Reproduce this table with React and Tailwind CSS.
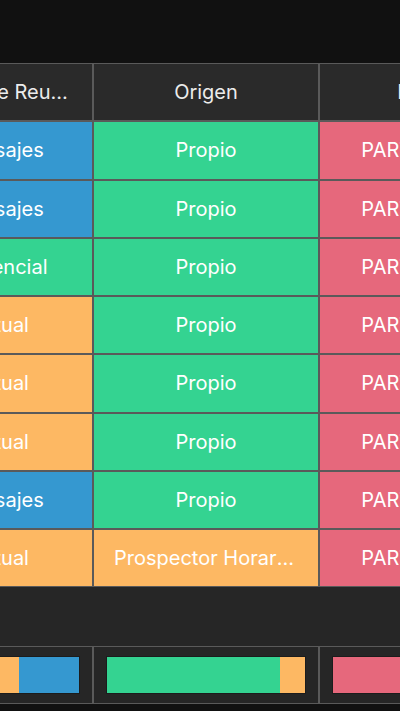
import { useMemo } from 'react';

const TONES = {
  Mensajes: 'bg-[#3598d0]',
  Presencial: 'bg-[#34d391]',
  Virtual: 'bg-[#fdb863]',
  Propio: 'bg-[#34d391]',
  'Prospector Horario Extendido': 'bg-[#fdb863]',
  PARTICIPANTE: 'bg-[#e6687c]',
};

const COLUMNS = [
  { key: 'tipo', label: 'Modo de Reunión' },
  { key: 'origen', label: 'Origen' },
  { key: 'etapa', label: 'Estatus' },
];

const ROWS = [
  { tipo: 'Mensajes', origen: 'Propio', etapa: 'PARTICIPANTE' },
  { tipo: 'Mensajes', origen: 'Propio', etapa: 'PARTICIPANTE' },
  { tipo: 'Presencial', origen: 'Propio', etapa: 'PARTICIPANTE' },
  { tipo: 'Virtual', origen: 'Propio', etapa: 'PARTICIPANTE' },
  { tipo: 'Virtual', origen: 'Propio', etapa: 'PARTICIPANTE' },
  { tipo: 'Virtual', origen: 'Propio', etapa: 'PARTICIPANTE' },
  { tipo: 'Mensajes', origen: 'Propio', etapa: 'PARTICIPANTE' },
  { tipo: 'Virtual', origen: 'Prospector Horario Extendido', etapa: 'PARTICIPANTE' },
];

const GRID = 'grid grid-cols-[189px_226px_226px]';
const CELL = 'h-[58.25px] border border-[#5a5a5a] flex items-center justify-center px-5 min-w-0';

const App = () => {
  // share of each value per column, for the summary bars at the bottom
  const summary = useMemo(
    () =>
      COLUMNS.map((col) => {
        const counts = {};
        ROWS.forEach((row) => {
          counts[row[col.key]] = (counts[row[col.key]] || 0) + 1;
        });
        return Object.entries(counts).map(([value, n]) => ({ value, pct: (n / ROWS.length) * 100 }));
      }),
    []
  );

  const order = ['Presencial', 'Virtual', 'Mensajes', 'Propio', 'Prospector Horario Extendido', 'PARTICIPANTE'];

  return (
    <div className="w-[400px] h-[711px] bg-[#111111] overflow-hidden font-['Inter',sans-serif]">
      <div className="h-[63px]" />

      <div className="bg-[#262626] overflow-hidden">
        <div className="ml-[-96px] w-[641px]">
          <div className={GRID}>
            {COLUMNS.map((col) => (
              <div key={col.key} className={`${CELL} bg-[#2a2a2a]`}>
                <span className="truncate text-[20px] text-[#ececec]">{col.label}</span>
              </div>
            ))}
          </div>

          {ROWS.map((row, i) => (
            <div key={i} className={GRID}>
              {COLUMNS.map((col) => (
                <div key={col.key} className={`${CELL} ${TONES[row[col.key]]}`}>
                  <span className="truncate text-[20px] text-white">{row[col.key]}</span>
                </div>
              ))}
            </div>
          ))}

          <div className="h-[58.25px]" />

          <div className={GRID}>
            {summary.map((parts, i) => (
              <div key={i} className="h-[58.25px] border border-[#5a5a5a] px-3 py-[9px]">
                <div className="h-full flex overflow-hidden border border-black/25">
                  {[...parts]
                    .sort((a, b) => order.indexOf(a.value) - order.indexOf(b.value))
                    .map((p) => (
                      <div key={p.value} className={TONES[p.value]} style={{ width: `${p.pct}%` }} />
                    ))}
                </div>
              </div>
            ))}
          </div>
        </div>
      </div>
    </div>
  );
};

export default App;
